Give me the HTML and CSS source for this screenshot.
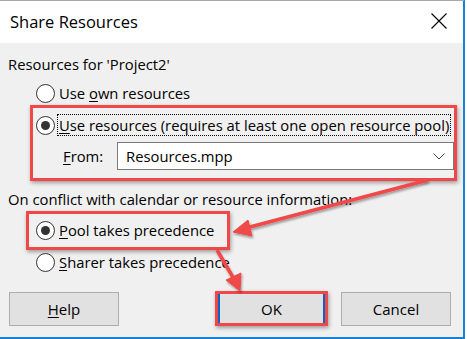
FILE: index.html
```html
<!DOCTYPE html>
<html lang="en">
<head>
    <meta charset="UTF-8">
    <title>Share Resources</title>
    <link rel="stylesheet" href="styles.css">
</head>
<body>
    <div class="dialog">
        <!-- Title bar -->
        <div class="titlebar">
            <span class="title">Share Resources</span>
            <svg class="close" width="16" height="16" viewBox="0 0 16 16">
                <path d="M0.5 0.5 L15.5 15.5 M15.5 0.5 L0.5 15.5" stroke="#000" stroke-width="1.1" fill="none"/>
            </svg>
        </div>

        <div class="content">
            <div class="group-label">Resources for 'Project2'</div>

            <label class="radio first">
                <span class="dot"></span>
                <span class="text">Use <u>o</u>wn resources</span>
            </label>

            <!-- highlighted: use pool -->
            <div class="callout callout-pool">
                <label class="radio checked">
                    <span class="dot"></span>
                    <span class="text focus"><u>U</u>se resources (requires at least one open resource pool)</span>
                </label>
                <div class="from-row">
                    <span class="from-label"><u>F</u>rom:</span>
                    <div class="combo">
                        <span>Resources.mpp</span>
                        <svg width="12" height="7" viewBox="0 0 12 7">
                            <path d="M0.5 0.5 L6 6 L11.5 0.5" stroke="#444" stroke-width="1" fill="none"/>
                        </svg>
                    </div>
                </div>
            </div>

            <div class="group-label second">On conflict with calendar or resource information:</div>

            <div class="callout callout-conflict">
                <label class="radio checked">
                    <span class="dot"></span>
                    <span class="text"><u>P</u>ool takes precedence</span>
                </label>
            </div>

            <label class="radio sharer">
                <span class="dot"></span>
                <span class="text"><u>S</u>harer takes precedence</span>
            </label>

            <div class="buttons">
                <button class="btn help"><u>H</u>elp</button>
                <button class="btn ok">OK</button>
                <button class="btn cancel">Cancel</button>
            </div>
        </div>

        <!-- annotation arrows drawn over the dialog -->
        <svg class="arrows" width="465" height="339" viewBox="0 0 465 339">
            <g fill="#f04848" stroke="#f04848" filter="url(#shadow)">
                <line x1="428" y1="180" x2="246" y2="228" stroke-width="3.5"/>
                <polygon points="233,232 248,220 252,236" stroke-width="1"/>
                <line x1="217" y1="250" x2="234" y2="279" stroke-width="3.5"/>
                <polygon points="240,291 226,280 241,273" stroke-width="1"/>
            </g>
            <defs>
                <filter id="shadow" x="-10%" y="-10%" width="130%" height="130%">
                    <feDropShadow dx="1" dy="2" stdDeviation="1.2" flood-color="#000" flood-opacity="0.35"/>
                </filter>
            </defs>
        </svg>
    </div>
</body>
</html>
```

FILE: styles.css
```css
/* Base */
body {
    margin: 0;
    background-color: #fff;
    font-family: "Open Sans", Arial, sans-serif;
    color: #000;
}

.dialog {
    position: relative;
    width: 465px;
    height: 339px;
    box-sizing: border-box;
    border-top: 1px solid #a8a8a8;
    border-right: 2px solid #1a80d4;
    border-bottom: 2px solid #1a80d4;
    background-color: #f0f0f0;
    overflow: hidden;
}

/* Title bar */
.titlebar {
    height: 42px;
    background-color: #fff;
    display: flex;
    align-items: center;
    justify-content: space-between;
    padding: 0 16px 0 10px;
}

.title {
    font-size: 16.5px;
    margin-top: -2px;
}

.close {
    margin-top: -2px;
}

/* Content */
.content {
    padding: 11px 10px 0 8px;
    font-size: 14.8px;
    line-height: 20px;
}

.group-label {
    height: 20px;
    white-space: nowrap;
}

.group-label.second {
    margin-top: 8px;
}

.radio {
    display: flex;
    align-items: center;
    height: 20px;
    gap: 4px;
}

.radio.first {
    margin: 9px 0 0 28px;
}

.radio.sharer {
    margin: 2px 0 0 28px;
}

.radio .dot {
    width: 19px;
    height: 19px;
    box-sizing: border-box;
    border: 1px solid #333;
    border-radius: 50%;
    background-color: #fff;
    display: flex;
    align-items: center;
    justify-content: center;
    flex-shrink: 0;
}

.radio.checked .dot::after {
    content: "";
    width: 9px;
    height: 9px;
    border-radius: 50%;
    background-color: #333;
}

.radio .text {
    white-space: nowrap;
}

.radio .focus {
    outline: 1px dotted #000;
    outline-offset: 0;
    padding: 0 1px;
    margin-left: -1px;
}

u {
    text-decoration-thickness: 1px;
    text-underline-offset: 2px;
}

/* Red highlight boxes */
.callout {
    border: 3px solid #f04848;
    box-shadow: 1px 2px 4px rgba(0, 0, 0, 0.35);
}

.callout-pool {
    width: 427px;
    box-sizing: border-box;
    margin: 2px 0 0 22px;
    padding: 7px 0 8px 3px;
}

.callout-conflict {
    width: 204px;
    box-sizing: border-box;
    margin: 2px 0 0 18px;
    padding: 6px 0 7px 7px;
}

.from-row {
    display: flex;
    align-items: center;
    margin-top: 7px;
}

.from-label {
    width: 54px;
    padding-left: 27px;
}

.combo {
    width: 337px;
    height: 28px;
    box-sizing: border-box;
    border: 1px solid #7a7a7a;
    background-color: #fff;
    display: flex;
    align-items: center;
    justify-content: space-between;
    padding: 0 8px 0 8px;
}

/* Buttons */
.buttons {
    display: flex;
    align-items: center;
    margin-top: 19px;
    padding-right: 2px;
}

.btn {
    width: 110px;
    height: 34px;
    border: 1px solid #adadad;
    background-color: #e1e1e1;
    font-family: inherit;
    font-size: 15px;
    color: #000;
    padding: 0;
}

.help {
    margin-left: 1px;
}

.ok {
    width: 113px;
    height: 35px;
    margin-left: auto;
    border: 3px solid #f04848;
    box-shadow: inset 2px 0 0 #0a64c8, inset -2px 0 0 #0a64c8, 1px 2px 4px rgba(0, 0, 0, 0.35);
}

.cancel {
    margin-left: 13px;
}

.arrows {
    position: absolute;
    left: 0;
    top: -1px;
    pointer-events: none;
}
```
